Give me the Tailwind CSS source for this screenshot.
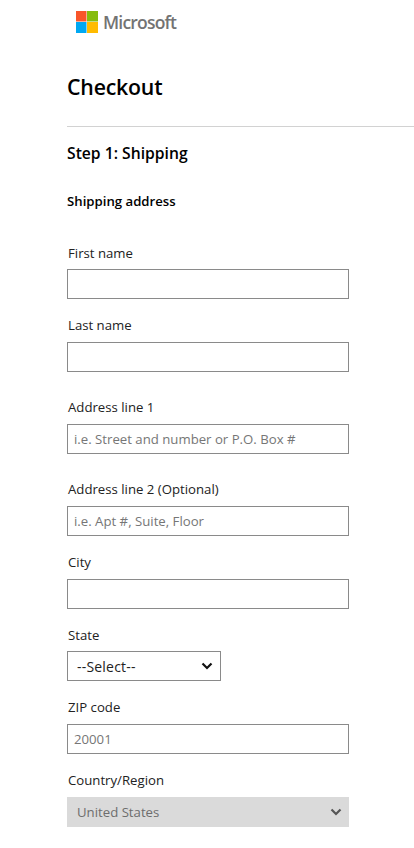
<!DOCTYPE html>
<html lang="en">
  <head>
    <meta charset="UTF-8" />
    <meta name="viewport" content="width=device-width, initial-scale=1.0" />
    <title>Checkout</title>
    <script src="https://cdn.jsdelivr.net/npm/@tailwindcss/browser@4"></script>
  </head>
  <body class="bg-white text-black font-['Open_Sans',sans-serif] overflow-x-hidden">
    <header class="flex items-center gap-[5px] pl-[76px] h-[44px]">
      <svg width="22" height="22" viewBox="0 0 22 22">
        <rect width="10.5" height="10.5" fill="#f8562a" />
        <rect x="11" width="11" height="10.5" fill="#86bc0e" />
        <rect y="11" width="10.5" height="11" fill="#00a8f2" />
        <rect x="11" y="11" width="11" height="11" fill="#ffbb00" />
      </svg>
      <span class="text-[17.5px] font-semibold text-[#737373] tracking-[-0.8px] leading-[22px]">Microsoft</span>
    </header>

    <main class="pl-[67px]">
      <h1 class="mt-[27px] h-[32px] text-[21.3px] leading-[32px] font-semibold tracking-[-0.2px]">Checkout</h1>
      <hr class="mt-[23px] border-[#d2d2d2]" />
      <h2 class="mt-[14px] h-[24px] text-[15.7px] leading-[24px] font-semibold">Step 1: Shipping</h2>
      <h3 class="mt-[26px] h-[20px] text-[13.2px] leading-[20px] font-semibold">Shipping address</h3>

      <form class="w-[282px] mt-[32px] text-[13.2px] text-[#222]">
        <label class="block pl-px h-[20px] leading-[20px]">First name</label>
        <input type="text" class="block mt-[6px] w-full h-[30px] border border-[#8a8a8a] px-[6px]" />

        <label class="block mt-[16px] pl-px h-[20px] leading-[20px]">Last name</label>
        <input type="text" class="block mt-[7px] w-full h-[30px] border border-[#8a8a8a] px-[6px]" />

        <label class="block mt-[25px] pl-px h-[20px] leading-[20px]">Address line 1</label>
        <input type="text" placeholder="i.e. Street and number or P.O. Box #" class="block mt-[7px] w-full h-[30px] border border-[#8a8a8a] px-[6px] placeholder:text-[#767676]" />

        <label class="block mt-[25px] pl-px h-[20px] leading-[20px]">Address line 2 (Optional)</label>
        <input type="text" placeholder="i.e. Apt #, Suite, Floor" class="block mt-[7px] w-full h-[30px] border border-[#8a8a8a] px-[6px] placeholder:text-[#767676]" />

        <label class="block mt-[16px] pl-px h-[20px] leading-[20px]">City</label>
        <input type="text" class="block mt-[7px] w-full h-[30px] border border-[#8a8a8a] px-[6px]" />

        <label class="block mt-[16px] pl-px h-[20px] leading-[20px]">State</label>
        <div class="flex items-center justify-between mt-[6px] w-[154px] h-[30px] border border-[#8a8a8a] pl-[9px] pr-[7px]">
          <span class="text-[14px] tracking-[0.2px]">--Select--</span>
          <svg width="12" height="8" viewBox="0 0 12 8" fill="none" stroke="#111" stroke-width="2.2"><path d="M1.5 1.5 6 6l4.5-4.5" /></svg>
        </div>

        <label class="block mt-[16px] pl-px h-[20px] leading-[20px]">ZIP code</label>
        <input type="text" placeholder="20001" class="block mt-[7px] w-full h-[30px] border border-[#8a8a8a] px-[6px] placeholder:text-[#767676]" />

        <label class="block mt-[16px] pl-px h-[20px] leading-[20px]">Country/Region</label>
        <div class="flex items-center justify-between mt-[7px] w-full h-[30px] bg-[#dadada] pl-[10px] pr-[7px] text-[#6d6d6d]">
          <span class="pt-px">United States</span>
          <svg width="12" height="8" viewBox="0 0 12 8" fill="none" stroke="#555" stroke-width="2.2"><path d="M1.5 1.5 6 6l4.5-4.5" /></svg>
        </div>
      </form>
    </main>
  </body>
</html>
